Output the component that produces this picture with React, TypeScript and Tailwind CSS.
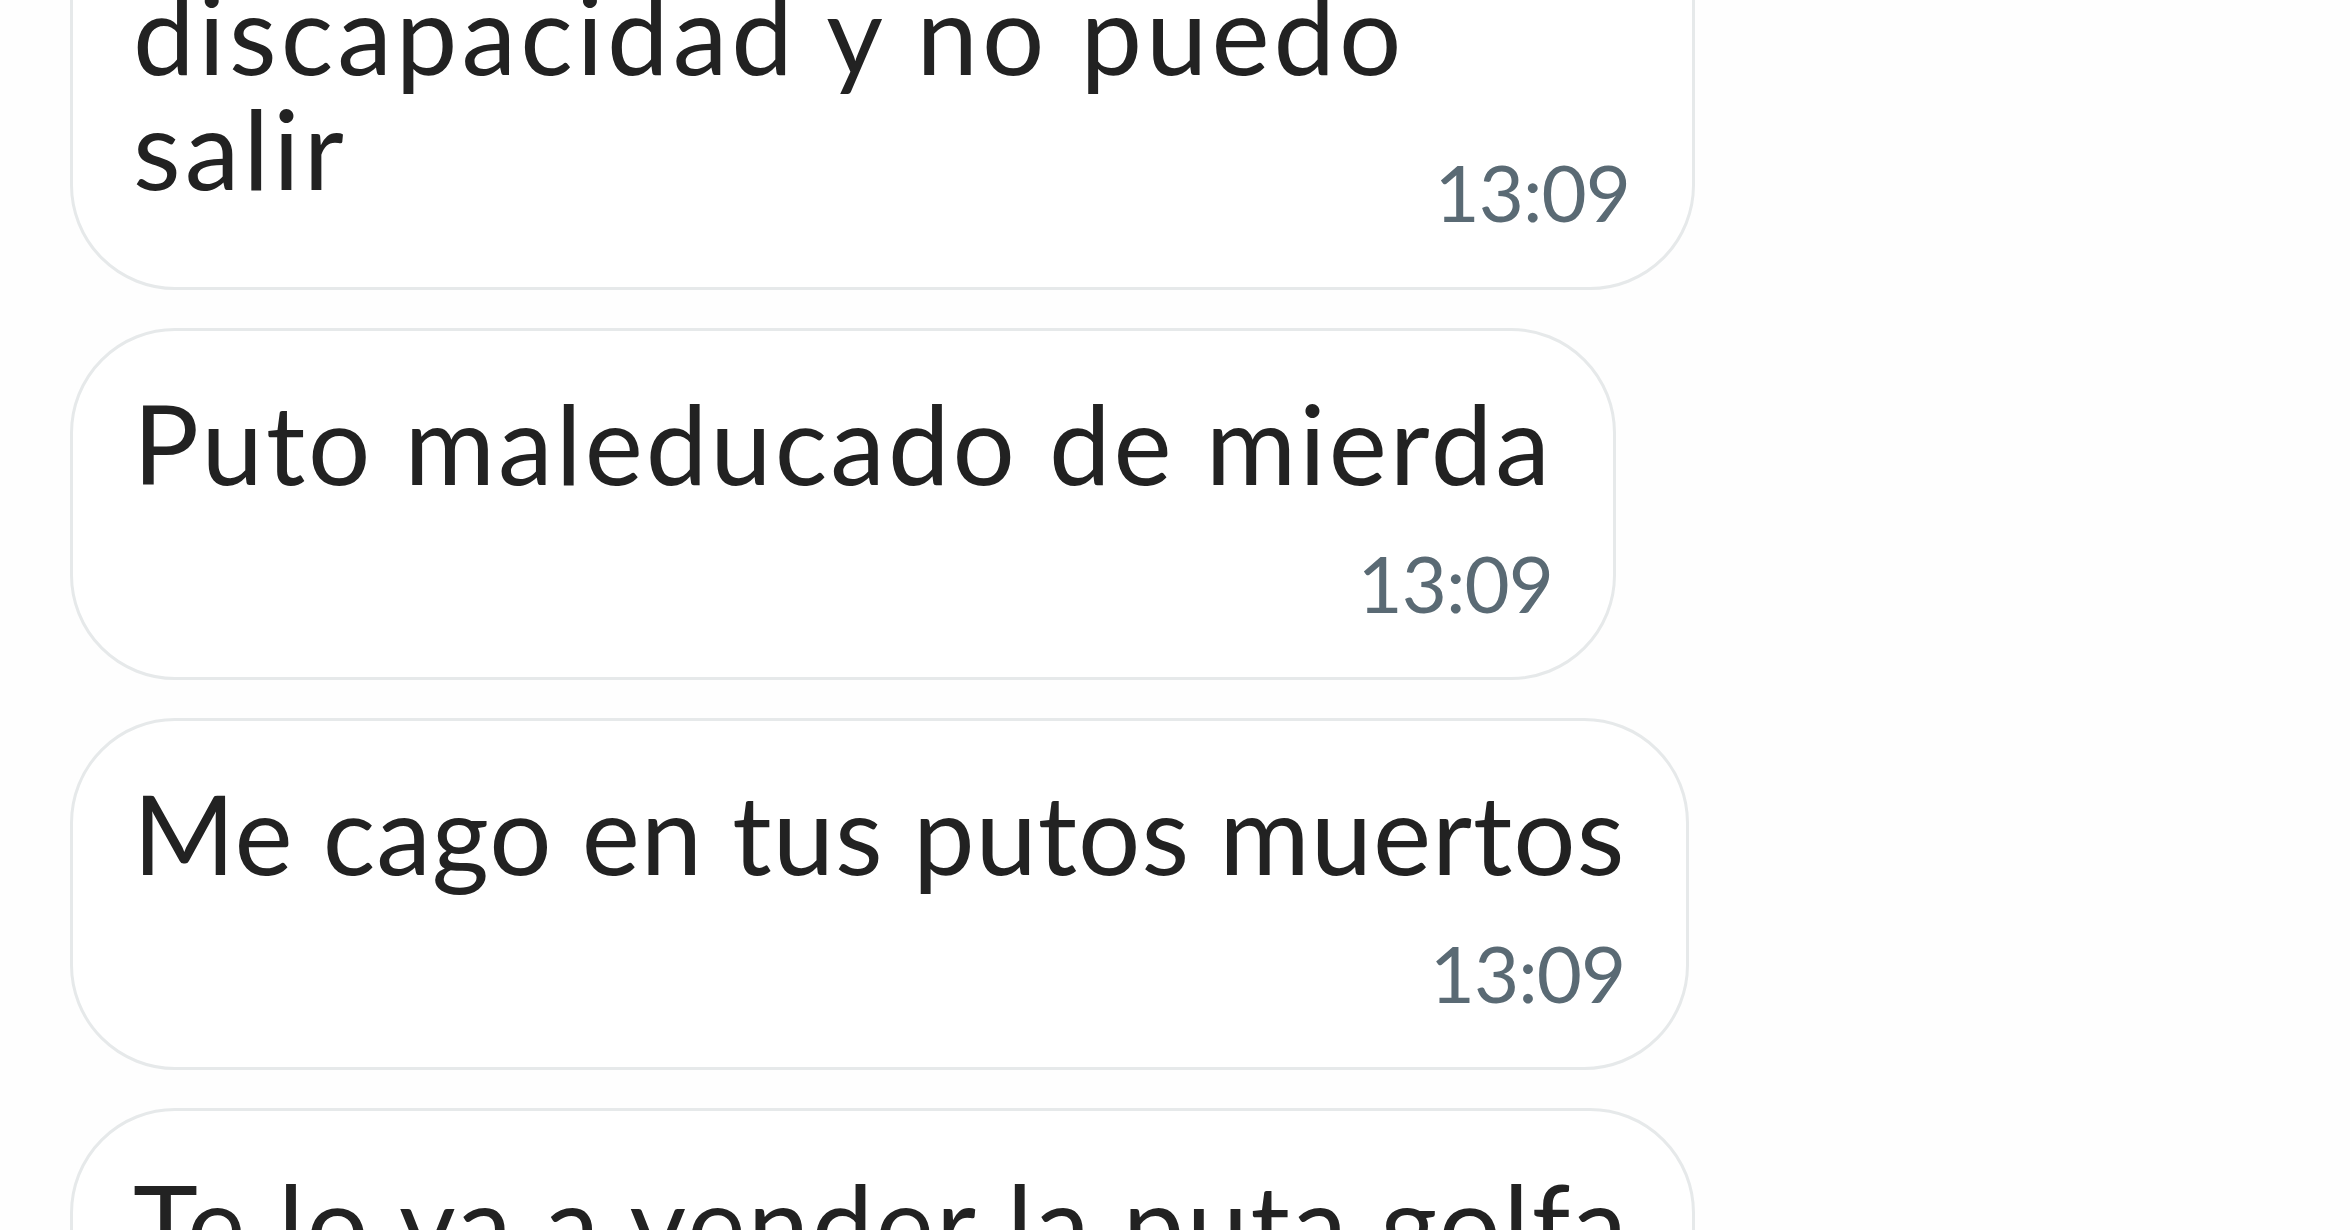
import React from "react";

const font = { fontFamily: "Lato, 'Noto Sans', sans-serif" };

function Time() {
  return (
    <div className="self-end text-[78px] leading-[94px] tracking-[-1px] text-[#5a6a74]">13:09</div>
  );
}

export default function App() {
  return (
    <div
      className="w-[2350px] h-[1230px] overflow-hidden bg-[#fefefe] pl-[70px]"
      style={font}
    >
      <div className="flex flex-col items-start gap-[38px]">
        {/* Bubble 1 (top cut off) */}
        <div className="mt-[-200px] w-[1625px] rounded-[105px] border-[3px] border-[#e6e9ea] bg-white pl-[60px] pr-[62px] pt-[172px] pb-[48px] text-[#222222]">
          <div className="flex items-start justify-between">
            <div className="text-[110px] leading-[115px] tracking-[4px]">
              discapacidad y no puedo
              <br />
              salir
            </div>
            <div className="mt-[170px] text-[78px] leading-[94px] tracking-[-1px] text-[#5a6a74]">13:09</div>
          </div>
        </div>

        {/* Bubble 2 */}
        <div className="flex flex-col rounded-[105px] border-[3px] border-[#e6e9ea] bg-white pl-[60px] pr-[60px] pt-[54px] pb-[47px] text-[#222222]">
          <div className="whitespace-nowrap text-[110px] leading-[115px] tracking-[3px]">Puto maleducado de mierda</div>
          <div className="mt-[36px] flex justify-end">
            <Time />
          </div>
        </div>

        {/* Bubble 3 */}
        <div className="flex flex-col rounded-[105px] border-[3px] border-[#e6e9ea] bg-white pl-[60px] pr-[61px] pt-[54px] pb-[47px] text-[#222222]">
          <div className="whitespace-nowrap text-[110px] leading-[115px] tracking-[1px]">Me cago en tus putos muertos</div>
          <div className="mt-[36px] flex justify-end">
            <Time />
          </div>
        </div>

        {/* Bubble 4 (bottom cut off) */}
        <div className="flex w-[1625px] flex-col rounded-[105px] border-[3px] border-[#e6e9ea] bg-white pl-[60px] pr-[62px] pt-[54px] pb-[47px] text-[#222222]">
          <div className="whitespace-nowrap text-[110px] leading-[115px] tracking-[2.4px]">Te lo va a vender la puta golfa</div>
          <div className="mt-[36px] flex justify-end">
            <Time />
          </div>
        </div>
      </div>
    </div>
  );
}
